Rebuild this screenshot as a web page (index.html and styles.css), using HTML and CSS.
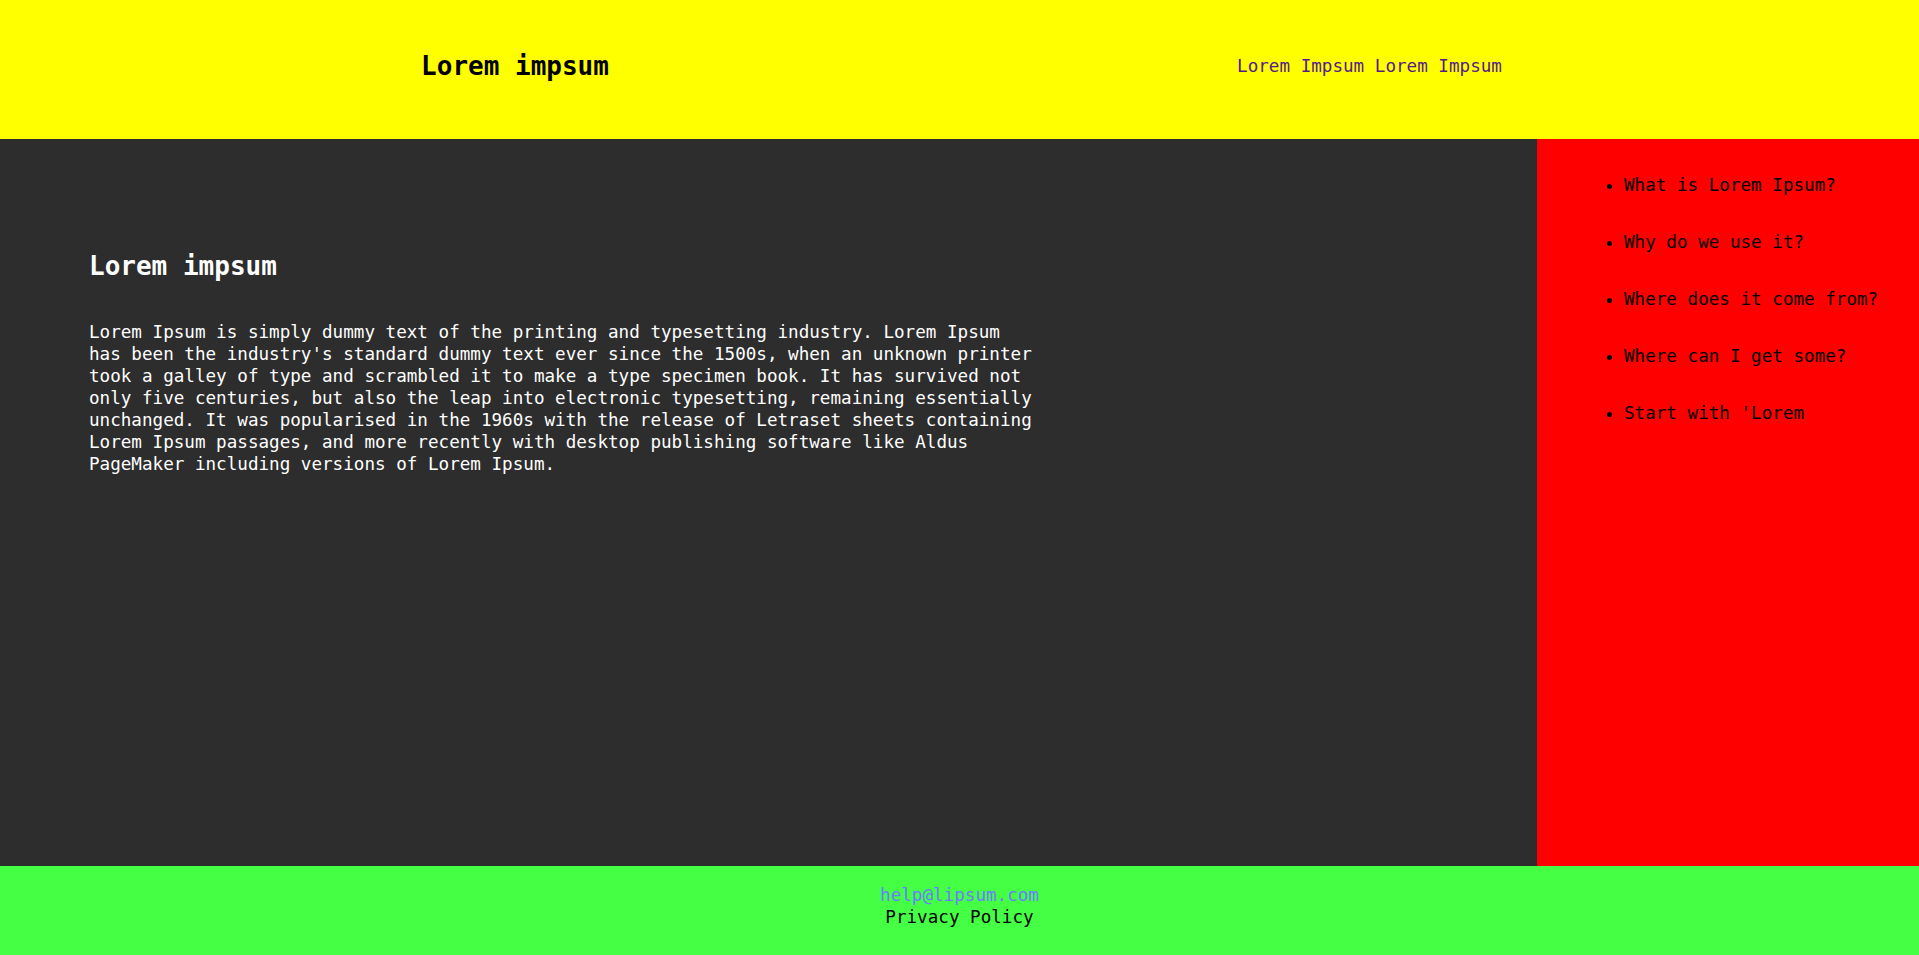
FILE: index.html
```html
<!DOCTYPE html>
<html lang="en">
<head>
<meta charset="utf-8">
<title>Lorem impsum</title>
<link rel="stylesheet" href="styles.css">
</head>
<body>
<header class="site-header">
  <div class="brand">Lorem impsum</div>
  <nav class="nav"><a href="#" class="nav-link">Lorem Impsum</a> <a href="#" class="nav-link">Lorem Impsum</a></nav>
</header>
<div class="layout">
  <main class="content">
    <h2 class="content-title">Lorem impsum</h2>
    <p class="content-text">Lorem Ipsum is simply dummy text of the printing and typesetting industry. Lorem Ipsum has been the industry's standard dummy text ever since the 1500s, when an unknown printer took a galley of type and scrambled it to make a type specimen book. It has survived not only five centuries, but also the leap into electronic typesetting, remaining essentially unchanged. It was popularised in the 1960s with the release of Letraset sheets containing Lorem Ipsum passages, and more recently with desktop publishing software like Aldus PageMaker including versions of Lorem Ipsum.</p>
  </main>
  <aside class="sidebar">
    <ul class="side-list">
      <li class="side-item">What is Lorem Ipsum?</li>
      <li class="side-item">Why do we use it?</li>
      <li class="side-item">Where does it come from?</li>
      <li class="side-item">Where can I get some?</li>
      <li class="side-item">Start with 'Lorem</li>
    </ul>
  </aside>
</div>
<footer class="site-footer">
  <a href="#" class="footer-mail">help@lipsum.com</a>
  <div class="footer-policy">Privacy Policy</div>
</footer>
</body>
</html>
```
FILE: styles.css
```css
html, body {
  margin: 0;
  padding: 0;
}
body {
  height: 100vh;
  display: flex;
  flex-direction: column;
  font-family: "DejaVu Sans Mono", "Liberation Mono", monospace;
  font-size: 17.6px;
  line-height: 22px;
}
.site-header {
  flex: 0 0 139px;
  background: #ffff00;
  display: flex;
  align-items: center;
  justify-content: space-around;
  padding: 0 103px 0 107px;
  box-sizing: border-box;
}
.brand {
  font-size: 26px;
  font-weight: bold;
  color: #000;
  line-height: 30px;
  margin-top: -8px;
}
.nav {
  font-size: 17.6px;
  margin-top: -7px;
}
.nav-link {
  color: #551a8b;
  text-decoration: none;
}
.layout {
  flex: 1;
  display: flex;
  min-height: 0;
}
.content {
  flex: 1;
  background: #2d2d2d;
  color: #ffffff;
  padding: 112px 0 0 89px;
}
.content-title {
  margin: 0;
  font-size: 26px;
  line-height: 30px;
  font-weight: bold;
}
.content-text {
  margin: 40px 0 0;
  width: 945px;
}
.sidebar {
  flex: 0 0 382px;
  background: #ff0000;
  color: #000;
}
.side-list {
  margin: 0;
  padding: 35px 0 0 87px;
}
.side-item {
  margin-bottom: 35px;
}
.site-footer {
  flex: 0 0 89px;
  background: #44ff44;
  text-align: center;
  padding-top: 18px;
  box-sizing: border-box;
}
.footer-mail {
  color: #6b7cff;
  text-decoration: none;
  display: block;
}
.footer-policy {
  color: #000;
}
```
